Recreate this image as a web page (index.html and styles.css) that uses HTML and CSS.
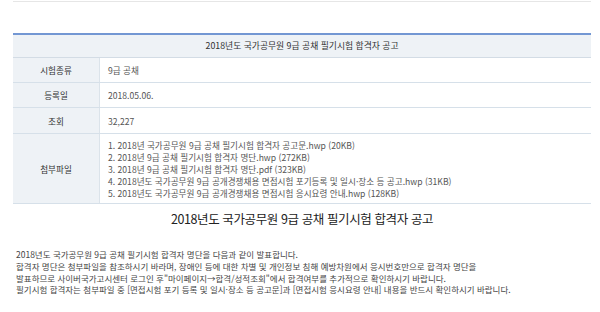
FILE: index.html
```html
<!DOCTYPE html>
<html lang="ko">
<head>
    <meta charset="UTF-8">
    <meta name="viewport" content="width=device-width, initial-scale=1.0">
    <title>2018년도 국가공무원 9급 공채 필기시험 합격자 공고</title>
    <link rel="stylesheet" href="styles.css">
</head>
<body>
    <div class="wrap">
        <div class="topline"></div>
        <div class="board">
            <div class="board-title">2018년도 국가공무원 9급 공채 필기시험 합격자 공고</div>
            <div class="row">
                <div class="label">시험종류</div>
                <div class="value">9급 공채</div>
            </div>
            <div class="row">
                <div class="label">등록일</div>
                <div class="value">2018.05.06.</div>
            </div>
            <div class="row">
                <div class="label">조회</div>
                <div class="value">32,227</div>
            </div>
            <div class="row files">
                <div class="label">첨부파일</div>
                <div class="value">
                    <ul class="file-list">
                        <li>1. 2018년 국가공무원 9급 공채 필기시험 합격자 공고문.hwp (20KB)</li>
                        <li>2. 2018년 9급 공채 필기시험 합격자 명단.hwp (272KB)</li>
                        <li>3. 2018년 9급 공채 필기시험 합격자 명단.pdf (323KB)</li>
                        <li>4. 2018년도 국가공무원 9급 공개경쟁채용 면접시험 포기등록 및 일시·장소 등 공고.hwp (31KB)</li>
                        <li>5. 2018년도 국가공무원 9급 공개경쟁채용 면접시험 응시요령 안내.hwp (128KB)</li>
                    </ul>
                </div>
            </div>
        </div>
        <h2 class="headline">2018년도 국가공무원 9급 공채 필기시험 합격자 공고</h2>
        <div class="content">
            <p>2018년도 국가공무원 9급 공채 필기시험 합격자 명단을 다음과 같이 발표합니다.</p>
            <p>합격자 명단은 첨부파일을 참조하시기 바라며, 장애인 등에 대한 차별 및 개인정보 침해 예방차원에서 응시번호만으로 합격자 명단을</p>
            <p>발표하므로 사이버국가고시센터 로그인 후"마이페이지→합격/성적조회"에서 합격여부를 추가적으로 확인하시기 바랍니다.</p>
            <p>필기시험 합격자는 첨부파일 중 [면접시험 포기 등록 및 일시·장소 등 공고문]과 [면접시험 응시요령 안내] 내용을 반드시 확인하시기 바랍니다.</p>
        </div>
    </div>
</body>
</html>
```

FILE: styles.css
```css
body { margin: 0; font-family: "Noto Sans CJK KR", "Noto Sans", sans-serif; color: #333; background: #fff; }
.wrap { width: 578px; margin-left: 13px; padding-top: 1px; }
.topline { border-top: 1px solid #e6e6e6; }
.board { margin-top: 31px; border-top: 2px solid #7397d3; }
.board-title { height: 22px; line-height: 22px; background: #eef2f6; border-bottom: 1px solid #d3dce5; text-align: center; font-size: 8.8px; color: #333; }
.row { display: grid; grid-template-columns: 87px 1fr; border-bottom: 1px solid #d6e0e9; font-size: 8.6px; }
.row .label { background: #eef2f6; border-right: 1px solid #dbe3ea; display: flex; align-items: center; justify-content: center; color: #333; }
.row .value { display: flex; align-items: center; padding-left: 8px; color: #555; height: 24px; }
.row:nth-child(4) .value { height: 25px; }
.row.files .value { height: 69px; }
.file-list { list-style: none; margin: 0; padding: 0; line-height: 12px; color: #555; }
.headline { margin: 7px 0 0; text-align: center; font-size: 12.5px; font-weight: normal; letter-spacing: -0.4px; color: #222; line-height: 16px; }
.content { margin-top: 22px; padding-left: 3px; font-size: 8.5px; line-height: 11.8px; color: #444; }
.content p { margin: 0; }
```
